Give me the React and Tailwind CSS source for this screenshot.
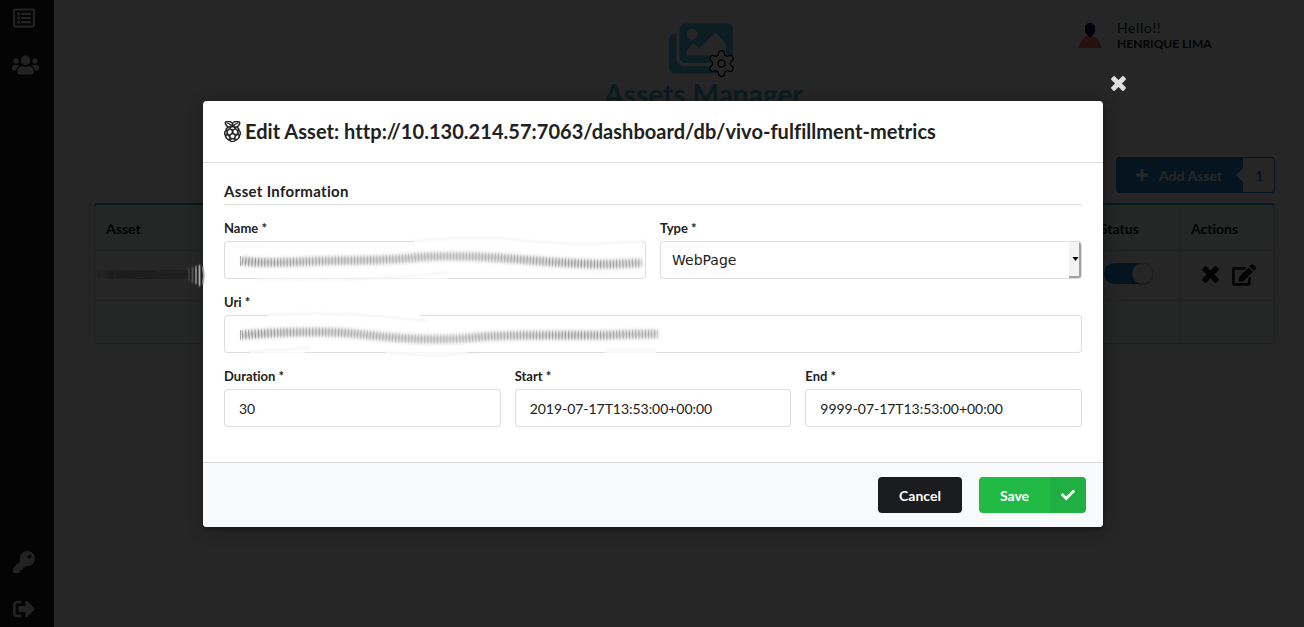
import React from "react";
import {
  FaRegListAlt,
  FaUsers,
  FaKey,
  FaSignOutAlt,
  FaImages,
  FaRaspberryPi,
  FaCheck,
  FaEdit,
} from "react-icons/fa";

function Times({ className }) {
  return (
    <svg viewBox="0 64 384 384" className={className} fill="currentColor">
      <path d="M323.1 441l53.9-53.9c9.4-9.4 9.4-24.5 0-33.9L279.8 256l97.2-97.2c9.4-9.4 9.4-24.5 0-33.9L323.1 71c-9.4-9.4-24.5-9.4-33.9 0L192 168.2 94.8 71c-9.4-9.4-24.5-9.4-33.9 0L7 124.9c-9.4 9.4-9.4 24.5 0 33.9l97.2 97.2L7 353.2c-9.4 9.4-9.4 24.5 0 33.9L60.9 441c9.4 9.4 24.5 9.4 33.9 0l97.2-97.2 97.2 97.2c9.3 9.3 24.5 9.3 33.9 0z" />
    </svg>
  );
}

function Plus({ className }) {
  return (
    <svg viewBox="0 0 12 12" className={className} fill="currentColor">
      <path d="M5.1 0h1.8a.6.6 0 0 1 .6.6v3.9h3.9a.6.6 0 0 1 .6.6v1.8a.6.6 0 0 1-.6.6H7.5v3.9a.6.6 0 0 1-.6.6H5.1a.6.6 0 0 1-.6-.6V7.5H.6a.6.6 0 0 1-.6-.6V5.1a.6.6 0 0 1 .6-.6h3.9V.6a.6.6 0 0 1 .6-.6z" />
    </svg>
  );
}

function Gear({ className }) {
  return (
    <svg viewBox="0 0 24 24" className={className} fill="#fff" stroke="#000" strokeWidth="1">
      <path d="M12.22 2h-.44a2 2 0 0 0-2 2v.18a2 2 0 0 1-1 1.73l-.43.25a2 2 0 0 1-2 0l-.15-.08a2 2 0 0 0-2.73.73l-.22.38a2 2 0 0 0 .73 2.73l.15.1a2 2 0 0 1 1 1.72v.51a2 2 0 0 1-1 1.74l-.15.09a2 2 0 0 0-.73 2.73l.22.38a2 2 0 0 0 2.73.73l.15-.08a2 2 0 0 1 2 0l.43.25a2 2 0 0 1 1 1.73V20a2 2 0 0 0 2 2h.44a2 2 0 0 0 2-2v-.18a2 2 0 0 1 1-1.73l.43-.25a2 2 0 0 1 2 0l.15.08a2 2 0 0 0 2.73-.73l.22-.39a2 2 0 0 0-.73-2.73l-.15-.08a2 2 0 0 1-1-1.74v-.5a2 2 0 0 1 1-1.74l.15-.09a2 2 0 0 0 .73-2.73l-.22-.38a2 2 0 0 0-2.73-.73l-.15.08a2 2 0 0 1-2 0l-.43-.25a2 2 0 0 1-1-1.73V4a2 2 0 0 0-2-2z" />
      <circle cx="12" cy="12" r="2.8" />
    </svg>
  );
}

function Avatar() {
  return (
    <svg viewBox="0 0 24 26" className="h-[26px] w-6 shrink-0">
      <path d="M0 26c2-5 4-9 7.500-11.500h8.500C20 17 22.500 21 24 26z" fill="#f87070" />
      <path d="M7 4l2.500-2.500L12 .8l2.500.7L17 4v6l-2 2.800-1.800 2.200h-2.400L9 12.800 7 10z" fill="#000050" />
    </svg>
  );
}

function Sidebar() {
  return (
    <aside className="flex w-[54px] shrink-0 flex-col items-start bg-[#1b1c1d] pl-3 text-[#e4e4e4]">
      <FaRegListAlt className="ml-px mt-[7px] h-[22px] w-[22px]" />
      <FaUsers className="mt-[25px] h-[22px] w-[27px]" />
      <div className="flex-1" />
      <FaKey className="ml-px h-[22px] w-[22px]" />
      <FaSignOutAlt className="mb-[7px] ml-px mt-[25px] h-[22px] w-[22px]" />
    </aside>
  );
}

function Dashboard() {
  return (
    <main className="relative flex-1 pl-10 pr-[29px]">
      <div className="flex h-[157px] flex-col items-center pl-[38px] pt-5">
        <div className="relative mr-[5px] h-[57px] w-16">
          <FaImages className="h-[57px] w-16 text-[#50c1e8]" />
          <Gear className="absolute left-[37px] top-[28px] h-[31px] w-[31px]" />
        </div>
        <h1 className="-mt-px text-[28px] font-bold leading-9 text-[#50b4e0]">Assets Manager</h1>
      </div>
      <div className="absolute right-[92px] top-[22px] flex">
        <Avatar />
        <div className="ml-[15px] text-[#1b1c1d]">
          <div className="-mt-px text-[14px] leading-[14px] tracking-[0.6px]">Hello!!</div>
          <div className="mt-[1px] w-[95px] whitespace-nowrap text-[12px] font-bold leading-[15px]">HENRIQUE LIMA</div>
        </div>
      </div>
      <div className="flex justify-end">
        <div className="flex h-9 w-[127px] items-center rounded-l bg-[#2185d0] pl-5 text-[14px] font-bold text-white">
          <Plus className="mr-[11px] h-3 w-3" />
          Add Asset
        </div>
        <div className="relative flex h-9 w-8 items-center justify-center rounded-r border border-l-0 border-[#2185d0] bg-white text-[14px] font-bold text-[#2185d0]">
          <span className="absolute -left-[5px] top-[12px] h-[10px] w-[10px] rotate-45 bg-white" />
          <span className="relative left-px">1</span>
        </div>
      </div>
      <div className="mt-[10px] overflow-hidden rounded border border-t-2 border-[#22242626] border-t-[#00b5ad] text-[14px]">
        <div className="flex h-[46px] items-stretch border-b border-[#2224261a] bg-[#f9fafb] pt-px font-bold text-[#111]">
          <div className="flex flex-1 items-center pl-[11px]">Asset</div>
          <div className="flex w-[90px] items-center pl-[11px]">Status</div>
          <div className="flex w-[95px] items-center border-l border-[#2224261a] pl-[11px]">Actions</div>
        </div>
        <div className="flex h-[49px] items-stretch">
          <div className="flex-1" />
          <div className="flex w-[90px] items-center pb-[5px] pl-[15px]">
            <div className="flex h-[21px] w-[49px] justify-end rounded-full bg-[#2185d0]">
              <div className="h-[21px] w-[21px] rounded-full bg-white shadow-[0_1px_2px_rgba(34,36,38,0.35),0_0_0_1px_rgba(34,36,38,0.15)_inset]" />
            </div>
          </div>
          <div className="flex w-[95px] items-center border-l border-[#2224261a] pb-[2px] pl-[22px] text-[#1b1c1d]">
            <Times className="h-[17px] w-[17px]" />
            <FaEdit className="ml-[13px] h-[22px] w-6" />
          </div>
        </div>
        <div className="flex h-[43px] items-stretch border-t border-[#2224261a] bg-[#f9fafb]">
          <div className="flex-1" />
          <div className="w-[95px] border-l border-[#2224261a]" />
        </div>
      </div>
    </main>
  );
}

function Field({ label, value, className }) {
  return (
    <div className={className}>
      <div className="h-[22px] text-[13px] font-bold leading-[18px]">{label}</div>
      <div className="flex h-[38px] items-center rounded border border-[#22242626] bg-white pl-[14px] text-[14px] tracking-[-0.04px]">
        {value}
      </div>
    </div>
  );
}

function EditModal() {
  return (
    <section className="flex h-[426px] w-[900px] flex-col overflow-hidden rounded bg-white text-[#212121] shadow-[1px_3px_3px_0_rgba(0,0,0,0.2),1px_3px_15px_2px_rgba(0,0,0,0.2)]">
      <header className="flex h-[62px] shrink-0 items-center border-b border-[#22242626] pl-[21px] text-[20px] font-bold">
        <FaRaspberryPi className="mr-1 h-[21px] w-[17px]" stroke="currentColor" strokeWidth="22" />
        <h2 className="pb-[2px] tracking-[0.035px]">Edit Asset: http://10.130.214.57:7063/dashboard/db/vivo-fulfillment-metrics</h2>
      </header>
      <div className="flex-1 px-[21px] pt-[18px]">
        <h4 className="h-6 border-b border-[#22242626] text-[15px] font-bold leading-[21px] tracking-[0.32px]">Asset Information</h4>
        <div className="mt-[14px] flex gap-[14px]">
          <Field label="Name *" className="w-[422px]" />
          <div className="w-[422px]">
            <div className="h-[22px] text-[13px] font-bold leading-[18px]">Type *</div>
            <div className="flex h-[38px] items-center justify-between overflow-hidden rounded border border-[#22242626] pl-[11px] font-['DejaVu_Sans',sans-serif] text-[14px]">
              <span>WebPage</span>
              <span className="flex h-9 w-3 items-center justify-end border-b-2 border-r-2 border-[#a0a0a0] bg-[#f3f3f3]">
                <svg viewBox="0 0 6 4" className="h-1 w-[7px]">
                  <path d="M0 0h6L3 4z" fill="#000" />
                </svg>
              </span>
            </div>
          </div>
        </div>
        <Field label="Uri *" className="mt-[14px]" />
        <div className="mt-[14px] flex gap-[14px]">
          <Field label="Duration *" value="30" className="flex-1" />
          <Field label="Start *" value="2019-07-17T13:53:00+00:00" className="flex-1" />
          <Field label="End *" value="9999-07-17T13:53:00+00:00" className="flex-1" />
        </div>
      </div>
      <footer className="flex h-[65px] shrink-0 items-start justify-end gap-[17px] border-t border-[#22242626] bg-[#f9fafb] pr-[17px] pt-[14px] text-[14px] font-bold text-white">
        <button className="h-9 w-[84px] rounded bg-[#1b1c1d]">Cancel</button>
        <button className="flex h-9 w-[107px] overflow-hidden rounded bg-[#21ba45]">
          <span className="flex h-9 w-[71px] items-center justify-center">Save</span>
          <span className="flex h-9 w-9 items-center justify-center bg-black/5">
            <FaCheck className="h-[14px] w-[14px]" />
          </span>
        </button>
      </footer>
    </section>
  );
}

const NAME_SMEAR = "M242 261 C265 264 290 262 320 261 S380 261 410 258 S470 256 500 258 S560 263 590 264 S625 263 642 263";
const URI_SMEAR = "M242 335 C265 333 290 332 320 332 S370 336 400 338 S450 340 480 337 S580 336 610 335 S645 334 658 334";

function Smears() {
  return (
    <svg viewBox="0 0 1304 627" className="pointer-events-none absolute inset-0 h-full w-full" fill="none">
      <defs>
        <filter id="soft" x="-10%" y="-200%" width="120%" height="500%">
          <feGaussianBlur stdDeviation="2" />
        </filter>
        <filter id="fine" x="-10%" y="-200%" width="120%" height="500%">
          <feGaussianBlur stdDeviation="0.4 1.2" />
        </filter>
        <linearGradient id="edge" x1="98" x2="206" y1="0" y2="0" gradientUnits="userSpaceOnUse">
          <stop offset="0" stopColor="#161616" stopOpacity="0.2" />
          <stop offset="0.2" stopColor="#181818" stopOpacity="0.85" />
          <stop offset="1" stopColor="#202020" stopOpacity="0.6" />
        </linearGradient>
        <linearGradient id="ink" x1="240" x2="660" y1="0" y2="0" gradientUnits="userSpaceOnUse">
          <stop offset="0" stopColor="#666" stopOpacity="0.6" />
          <stop offset="0.15" stopColor="#777" stopOpacity="0.45" />
          <stop offset="0.5" stopColor="#777" stopOpacity="0.25" />
          <stop offset="0.8" stopColor="#666" stopOpacity="0.5" />
          <stop offset="1" stopColor="#777" stopOpacity="0.35" />
        </linearGradient>
      </defs>
      <g filter="url(#fine)" stroke="#fff" strokeWidth="5">
        <path d="M414 241 C450 240 500 241 540 241 S600 243 643 241" />
        <path d="M258 278 C320 280 380 278 448 278" opacity="0.6" />
        <path d="M268 315 C310 315 370 315 420 315" />
        <path d="M250 352 C270 352 290 352 305 352 M385 352 C410 352 440 353 468 352 M605 352 L656 352" opacity="0.8" />
      </g>
      <g filter="url(#fine)" stroke="#d8d8d8" strokeWidth="1" opacity="0.55">
        <path d="M412 241 C450 238 490 236 520 240 S600 245 645 241" />
        <path d="M258 279 C310 281 400 279 448 272" />
        <path d="M268 315 C320 311 370 315 428 321" />
        <path d="M248 352 L310 348 M384 352 C410 356 450 356 480 352 M605 350 L656 350" />
      </g>
      <g filter="url(#soft)" stroke="#999" opacity="0.5">
        <path d={NAME_SMEAR} strokeWidth="7" />
        <path d={URI_SMEAR} strokeWidth="7" />
      </g>
      <g filter="url(#fine)" stroke="url(#ink)" strokeDasharray="1.2 2">
        <path d={NAME_SMEAR} strokeWidth="9" />
        <path d={URI_SMEAR} strokeWidth="9" />
      </g>
      <path d="M240.500 256v10 M240.500 330v10" stroke="#aaa" />
      <path d="M99 274 C125 278 150 273 194 275" stroke="url(#edge)" strokeWidth="10" filter="url(#soft)" />
      <g filter="url(#fine)" strokeWidth="1.8">
        <path d="M189 268v13" stroke="#3a3a3a" />
        <path d="M192.500 267v16" stroke="#555" />
        <path d="M196 266v18" stroke="#888" />
        <path d="M199.500 265v21" stroke="#aaa" />
        <path d="M203 267c1 5 1 12 0 17" stroke="#aaa" />
      </g>
    </svg>
  );
}

export default function App() {
  return (
    <div className="relative flex h-[627px] w-[1304px] overflow-hidden bg-white font-['Lato',sans-serif] [font-variant-ligatures:none]">
      <Sidebar />
      <Dashboard />
      <div className="absolute inset-0 flex items-start bg-black/85 pl-[203px] pt-[101px]">
        <EditModal />
        <Times className="-mt-[25px] ml-2 h-[15px] w-[15px] text-[#dedede]" />
      </div>
      <Smears />
    </div>
  );
}
